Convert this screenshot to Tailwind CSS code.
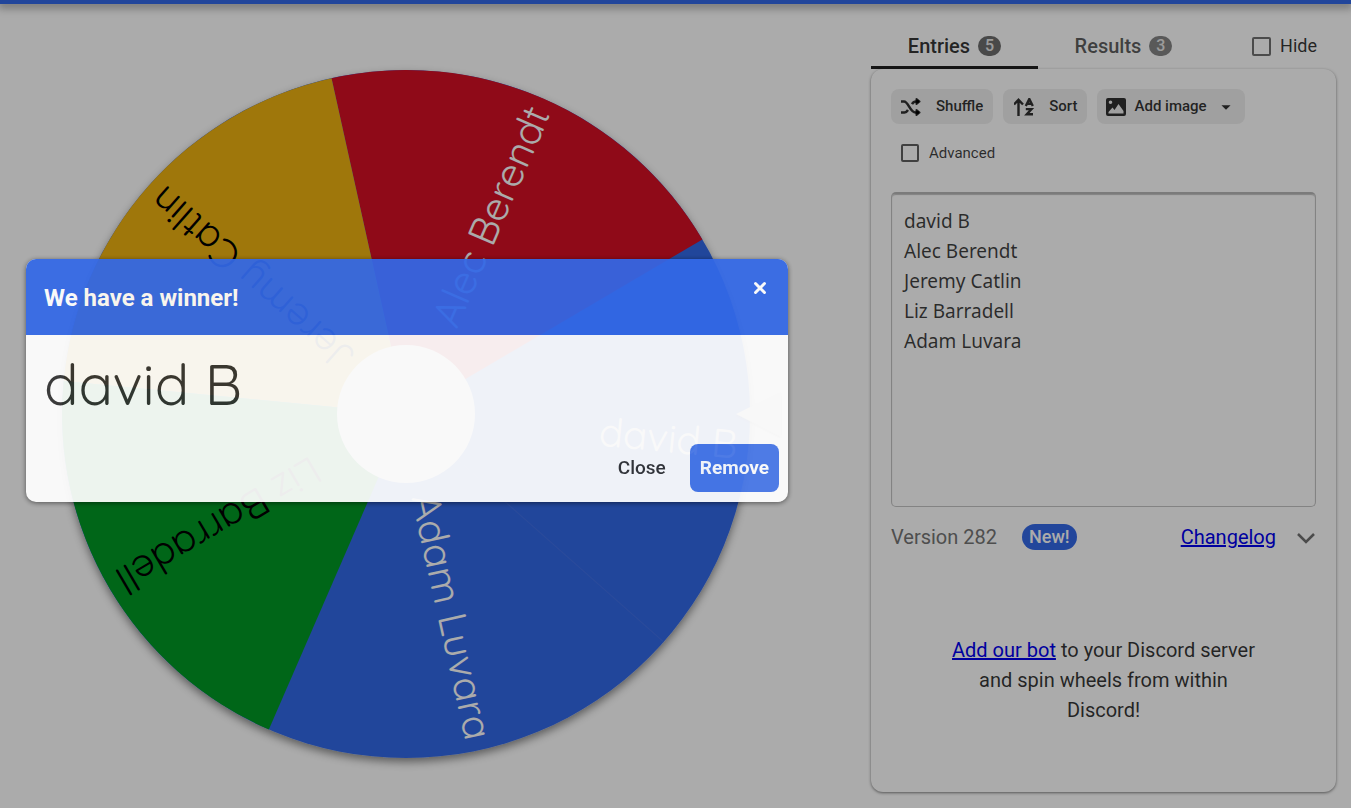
<!DOCTYPE html>
<html lang="en">
<head>
<meta charset="utf-8">
<meta name="viewport" content="width=device-width, initial-scale=1">
<title>Wheel of Names</title>
<script src="https://cdn.jsdelivr.net/npm/@tailwindcss/browser@4"></script>
</head>
<body class="flex min-h-screen flex-col bg-white font-['Roboto',sans-serif] text-black/80">
<header class="relative h-1 bg-[#3369e8] shadow-[0_2px_8px_2px_rgba(0,0,0,0.35)]"></header>

<main class="flex flex-1 gap-[58px]">
  <section class="relative min-w-0 flex-1">
    <svg class="block w-full" viewBox="0 0 813 800" role="img" aria-label="Wheel with names">
      <defs>
        <filter id="shade" x="-10%" y="-10%" width="120%" height="120%">
          <feDropShadow dx="0" dy="4" stdDeviation="4" flood-color="#000" flood-opacity="0.45"/>
        </filter>
        <filter id="soft" x="-30%" y="-30%" width="160%" height="160%">
          <feDropShadow dx="0" dy="1" stdDeviation="1" flood-color="#000" flood-opacity="0.4"/>
        </filter>
      </defs>
      <g transform="translate(406 410)">
        <circle r="344" fill="#3369e8" filter="url(#shade)"/>
        <g transform="rotate(-0.3)">
          <path d="M0 0L297.3-173A344 344 0 0 0-72.7-336.2Z" fill="#d50f25"/>
          <path d="M0 0L-72.7-336.2A344 344 0 0 0-342.2-34.8Z" fill="#eeb211"/>
          <path d="M0 0L-342.2-34.8A344 344 0 0 0-138.8 314.8Z" fill="#009925"/>
          <path d="M0 0L256.4 229.3" stroke="#4170e6" stroke-width="1"/>
          <g class="font-['Quicksand','Lato',sans-serif] font-normal" font-size="40" text-anchor="end" fill="#fff">
            <text transform="rotate(5.8)" x="333" y="13">david B</text>
            <text transform="rotate(-66.2)" x="333" y="13">Alec Berendt</text>
            <text transform="rotate(-138.2)" x="333" y="13" fill="#000">Jeremy Catlin</text>
            <text transform="rotate(149.8)" x="333" y="13" fill="#000">Liz Barradell</text>
            <text transform="rotate(77.8)" x="333" y="13">Adam Luvara</text>
          </g>
        </g>
        <circle r="69" fill="#fff"/>
        <path d="M330 0L375-22V23Z" fill="#e0e0e0" filter="url(#soft)"/>
      </g>
    </svg>

    <div role="dialog" aria-labelledby="dialog-title" class="absolute top-[255px] right-[25px] left-[26px] z-20 overflow-hidden rounded-[10px] bg-white opacity-93 shadow-[0_1px_5px_rgba(0,0,0,0.55)]">
      <div class="flex h-[76px] items-center justify-between bg-[#3369e8] pt-px pr-5 pl-[18px] text-white">
        <h2 id="dialog-title" class="text-2xl font-bold">We have a winner!</h2>
        <button type="button" aria-label="Dismiss" class="mb-5 flex size-4 items-center justify-center">
          <svg class="size-4" viewBox="0 0 16 16" fill="none" stroke="currentColor" stroke-width="3" stroke-linecap="round"><path d="M3.500 3.500L12.500 12.500M12.500 3.500L3.500 12.500"/></svg>
        </button>
      </div>
      <p class="px-[18px] pt-[13px] font-['Quicksand','Lato',sans-serif] text-[57px] leading-[72px] font-normal">david B</p>
      <div class="flex justify-end gap-3 px-[9px] pt-6 pb-[10px] text-[19px] font-medium">
        <button type="button" class="h-12 rounded-lg px-3 font-medium">Close</button>
        <button type="button" class="h-12 rounded-lg bg-[#3369e8]/90 px-[10px] font-bold text-white">Remove</button>
      </div>
    </div>
  </section>

  <aside class="mr-[15px] flex w-[465px] flex-col pt-5 pb-4">
    <div class="flex h-[45px] items-stretch text-[20px]">
      <div role="tablist" class="flex">
        <button type="button" role="tab" aria-selected="true" class="flex w-[167px] items-center justify-center gap-2 border-b-3 border-black/87 pt-[2px] font-medium">Entries
          <span class="flex h-5 w-[23px] items-center justify-center rounded-full bg-[#6d6d6d] text-base font-medium text-[#e8e8e8]">5</span></button>
        <button type="button" role="tab" aria-selected="false" class="flex w-[171px] items-center justify-center gap-2 border-b-3 border-transparent pt-[2px] font-medium text-black/65">Results
          <span class="flex h-5 w-[23px] items-center justify-center rounded-full bg-[#858585] text-base font-medium text-[#e8e8e8]">3</span></button>
      </div>
      <label class="mr-[19px] ml-auto flex items-center gap-[9px] pb-px text-lg"><input type="checkbox" class="size-[19px] appearance-none rounded-[2px] border-2 border-[#707070]">Hide</label>
    </div>

    <div class="flex flex-1 flex-col rounded-xl bg-white px-5 pt-5 shadow-[0_1px_3px_rgba(0,0,0,0.5)]">
      <div class="flex gap-[10px] text-[15px] font-medium">
        <button type="button" class="flex h-[35px] items-center gap-[13px] rounded-lg bg-[#efefef] px-[10px]">
          <svg class="h-[18px] w-[22px]" viewBox="0 0 22 18" fill="none" stroke="currentColor" stroke-width="2.500" stroke-linejoin="round"><path d="M0 3.500H3C7.500 3.500 9 14.500 14.500 14.500H18M0 14.500H3.500C5 14.500 6 13.500 7 12M11 6.200C12 4.500 13 3.500 15 3.500H18"/><path d="M15.500 1L18.500 3.500 15.500 6ZM15.500 12L18.500 14.500 15.500 17Z" fill="currentColor" stroke-width="2"/></svg>
          Shuffle</button>
        <button type="button" class="flex h-[35px] items-center gap-[14px] rounded-lg bg-[#efefef] pr-[10px] pl-[11px]">
          <svg class="h-[18px] w-[21px]" viewBox="0 0 21 18" fill="none" stroke="currentColor" stroke-width="2.400"><path d="M4.500 18V2M0 6.500L4.500 1.800 9 6.500"/><path d="M11.800 8L15.300 1 18.800 8M13.200 5.800H17.400M11.800 11.100H17.500L12.800 16.300H19" stroke-width="2.400"/></svg>
          Sort</button>
        <button type="button" class="flex h-[35px] items-center gap-2 rounded-lg bg-[#efefef] pr-2 pl-[9px]">
          <svg class="h-[18px] w-5" viewBox="0 0 20 18"><path fill="currentColor" fill-rule="evenodd" d="M2 0H18Q20 0 20 2V16Q20 18 18 18H2Q0 18 0 16V2Q0 0 2 0ZM2.500 15.500H17.500V13L12.500 6 8.500 12 6.500 9.500 2.500 14ZM4.500 2.500A1.800 1.800 0 1 0 4.500 6.100 1.800 1.800 0 1 0 4.500 2.500Z"/></svg>
          Add image
          <svg class="size-[22px]" viewBox="0 0 24 24" fill="currentColor"><path d="M7 10l5 5 5-5z"/></svg></button>
      </div>
      <label class="mt-[19px] ml-[10px] flex items-center gap-[10px] self-start text-[15px] leading-5 text-black/75"><input type="checkbox" class="size-[18px] appearance-none rounded-[2px] border-2 border-[#606060]">Advanced</label>
      <textarea aria-label="Entries" spellcheck="false" class="mt-[29px] block h-[315px] w-full resize-none rounded-[5px] border border-t-2 border-[#c4c4c4] border-t-[#b8b8b8] bg-transparent px-3 pt-3 font-['Segoe_UI','Noto_Sans',sans-serif] text-[19px] leading-[30px] text-black/75 shadow-[inset_0_1px_1px_rgba(0,0,0,0.25)]">david B
Alec Berendt
Jeremy Catlin
Liz Barradell
Adam Luvara</textarea>
      <div class="mt-4 flex items-center text-[20px] leading-7">
        <span class="text-[#757575]">Version 282</span>
        <span class="ml-[25px] rounded-full bg-[#3369e8] px-[7px] text-lg leading-[26px] font-medium text-white">New!</span>
        <a href="#changelog" class="ml-auto text-[#0000ee] underline">Changelog</a>
        <button type="button" aria-label="Expand" class="ml-5"><svg class="h-5 w-5" viewBox="0 0 20 20" fill="none" stroke="#707070" stroke-width="2.500"><path d="M2 7L10 15 18 7"/></svg></button>
      </div>
      <p class="mx-auto mt-[84px] max-w-[305px] text-center text-[20px] leading-[30px]"><a href="#bot" class="text-[#0000ee] underline">Add our bot</a> to your Discord server and spin wheels from within Discord!</p>
    </div>
  </aside>
</main>
<div class="pointer-events-none fixed inset-0 z-10 bg-black/33"></div>
</body>
</html>
